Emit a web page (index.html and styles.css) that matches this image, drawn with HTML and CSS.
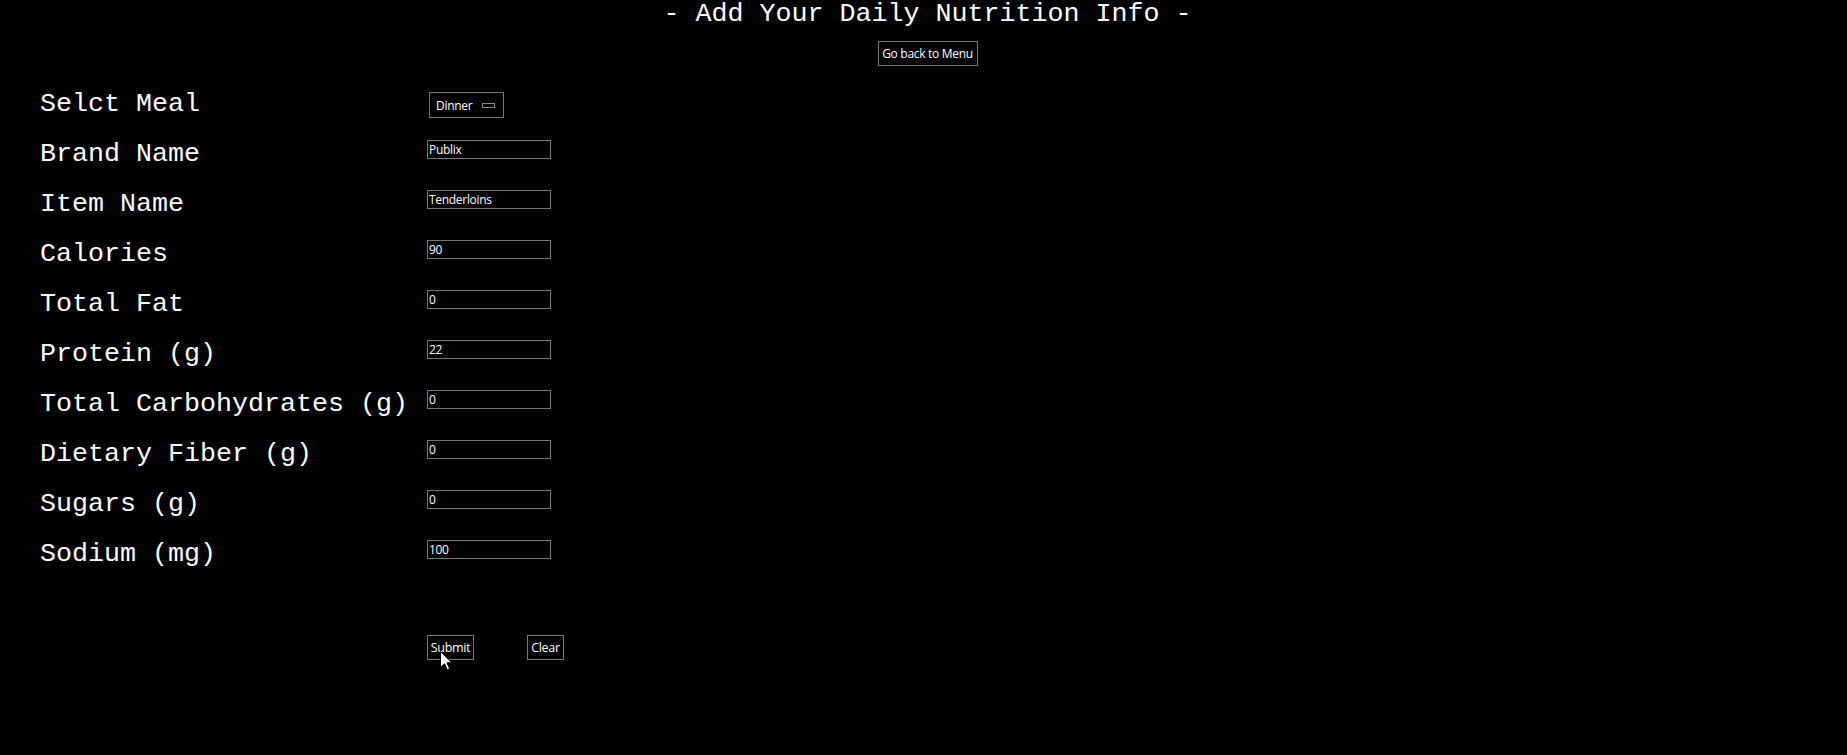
FILE: index.html
```html
<!DOCTYPE html>
<html lang="en">
<head>
<meta charset="utf-8">
<title>Add Nutrition Info</title>
<link rel="stylesheet" href="styles.css">
</head>
<body>
<h1 class="title">- Add Your Daily Nutrition Info -</h1>
<div class="back-wrap"><button class="btn btn-back" type="button">Go back to Menu</button></div>
<form class="form">
  <div class="row"><label class="label">Selct Meal</label><div class="select"><span class="select-text">Dinner</span><span class="select-arrow"></span></div></div>
  <div class="row"><label class="label">Brand Name</label><input class="field" type="text" value="Publix"></div>
  <div class="row"><label class="label">Item Name</label><input class="field" type="text" value="Tenderloins"></div>
  <div class="row"><label class="label">Calories</label><input class="field" type="text" value="90"></div>
  <div class="row"><label class="label">Total Fat</label><input class="field" type="text" value="0"></div>
  <div class="row"><label class="label">Protein (g)</label><input class="field" type="text" value="22"></div>
  <div class="row"><label class="label">Total Carbohydrates (g)</label><input class="field" type="text" value="0"></div>
  <div class="row"><label class="label">Dietary Fiber (g)</label><input class="field" type="text" value="0"></div>
  <div class="row"><label class="label">Sugars (g)</label><input class="field" type="text" value="0"></div>
  <div class="row"><label class="label">Sodium (mg)</label><input class="field" type="text" value="100"></div>
  <div class="actions">
    <button class="btn btn-submit" type="button">Submit</button>
    <button class="btn btn-clear" type="button">Clear</button>
  </div>
</form>
<svg class="cursor" width="13" height="20" viewBox="0 0 13 20"><path d="M0.5 0.5 L0.5 16.5 L4.5 12.7 L7.2 18.8 L9.6 17.8 L7 11.8 L12 11.8 Z" fill="#fff" stroke="#000" stroke-width="1"/></svg>
</body>
</html>
```
FILE: styles.css
```css
html, body {
  margin: 0;
  padding: 0;
  background: #000;
  color: #fff;
}
body {
  position: relative;
  min-height: 755px;
  font-family: "Courier New", "Liberation Mono", monospace;
}
.title {
  margin: -1px 0 0;
  padding-left: 8px;
  font-size: 26.67px;
  line-height: 30px;
  font-weight: normal;
  text-align: center;
  white-space: pre;
}
.back-wrap {
  padding-left: 8px;
  margin-top: 12px;
  display: flex;
  justify-content: center;
}
.btn {
  box-sizing: border-box;
  height: 25px;
  padding: 0;
  background: #000;
  color: #fff;
  border: 1px solid #767676;
  font-family: "Open Sans", "Noto Sans", sans-serif;
  font-size: 12.5px;
  letter-spacing: -0.3px;
  text-align: center;
}
.btn-back {
  width: 100px;
  font-size: 12px;
}
.form {
  margin-top: 23px;
  padding-left: 40px;
}
.row {
  display: flex;
  align-items: flex-start;
  height: 50px;
}
.label {
  width: 387px;
  flex: none;
  font-size: 26.67px;
  line-height: 30px;
  white-space: pre;
}
.field {
  box-sizing: border-box;
  width: 124px;
  height: 19px;
  margin: 1px 0 0;
  padding: 0 1px;
  background: #000;
  color: #fff;
  border: 1px solid #767676;
  font-family: "Open Sans", "Noto Sans", sans-serif;
  font-size: 12px;
  letter-spacing: -0.3px;
  outline: none;
}
.select {
  box-sizing: border-box;
  width: 75px;
  height: 26px;
  margin: 3px 0 0 2px;
  padding: 0 8px 0 6px;
  display: flex;
  align-items: center;
  justify-content: space-between;
  border: 1px solid #767676;
  font-family: "Open Sans", "Noto Sans", sans-serif;
  font-size: 12px;
  letter-spacing: -0.3px;
}
.select-arrow {
  box-sizing: border-box;
  width: 13px;
  height: 5px;
  border: 1px solid #8a8a8a;
}
.actions {
  margin-top: 46px;
  padding-left: 387px;
  display: flex;
  gap: 53px;
}
.btn-submit { width: 47px; }
.btn-clear { width: 37px; }
.cursor {
  position: absolute;
  left: 440px;
  top: 651px;
}
```
